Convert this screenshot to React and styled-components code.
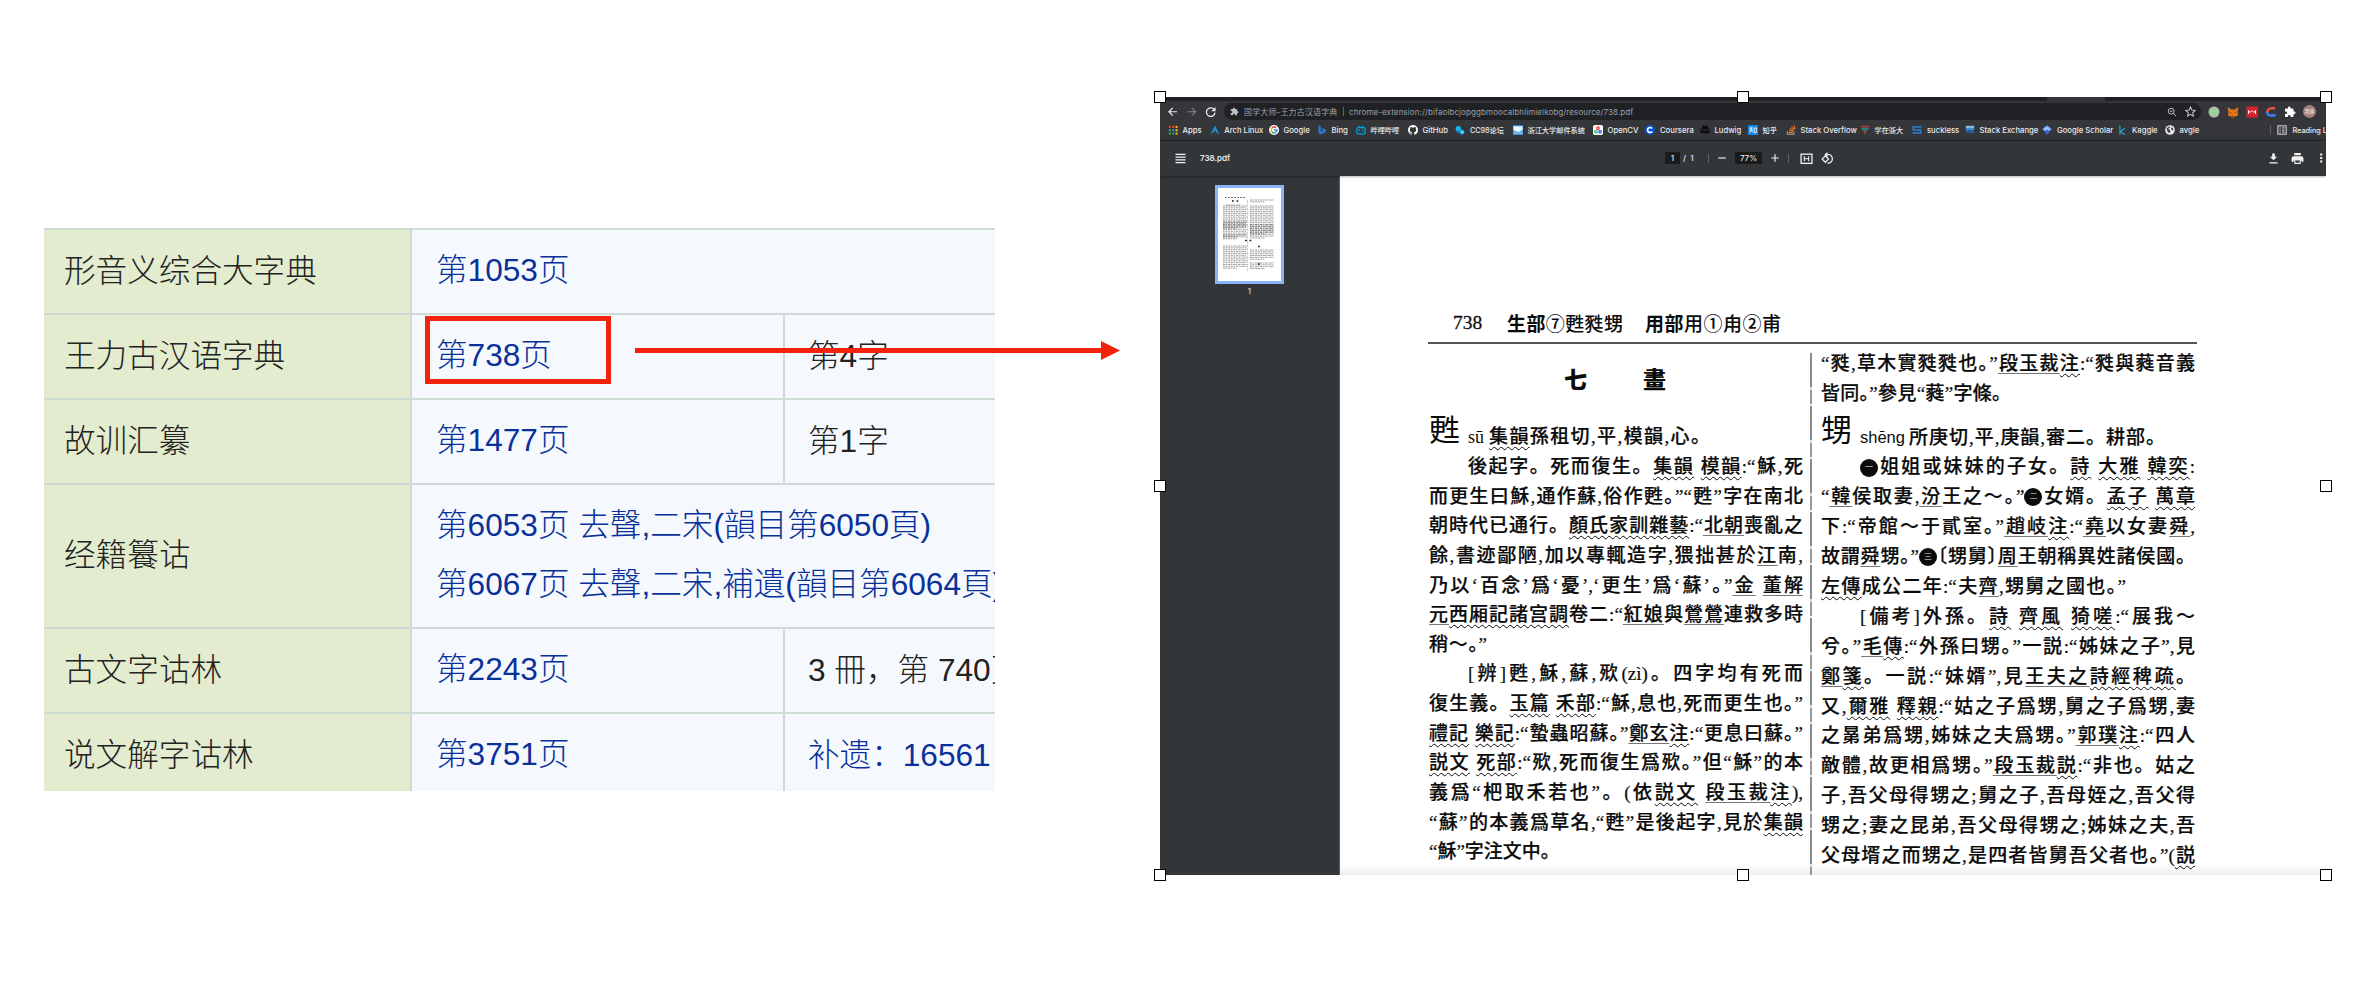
import React from "react";
import styled, { createGlobalStyle, css } from "styled-components";

const Global = createGlobalStyle`
  * { box-sizing: border-box; }
  body { margin: 0; background: #fff; overflow: hidden; }
`;

const Stage = styled.main`
  position: relative;
  width: 2370px;
  height: 992px;
  display: flex;
  align-items: flex-start;
  overflow: hidden;
`;

/* ---------- dictionary index table ---------- */

const IndexTable = styled.section`
  flex: none;
  width: 951px;
  height: 563px;
  margin: 228px 0 0 44px;
  overflow: hidden;
  font-family: "Liberation Sans", "Noto Sans CJK SC", sans-serif;
  font-size: 31.6px;
  font-weight: 300;
`;

const IndexRow = styled.div`
  display: flex;
  height: ${(p) => (p.$tall ? 144 : 85)}px;
  border-top: 2px solid #ccdcd3;
`;

const NameCell = styled.div`
  flex: none;
  width: 368px;
  padding: 0 0 8px 20px;
  display: flex;
  align-items: center;
  white-space: nowrap;
  background: #e3ecce;
  border-right: 2px solid #ccdcd3;
  color: #222;
`;

const PageCell = styled.div`
  flex: ${(p) => (p.$wide ? "1 0 auto" : "0 0 373px")};
  padding: 0 0 2px 24px;
  display: flex;
  flex-direction: column;
  justify-content: center;
  line-height: 59.5px;
  white-space: nowrap;
  background: #f5f9fe;
  border-right: ${(p) => (p.$wide ? 0 : "2px solid #ccdcd3")};
  color: #0a3199;
`;

const NoteCell = styled.div`
  flex: 1 0 210px;
  padding: 0 0 8px 23px;
  display: flex;
  align-items: center;
  white-space: pre;
  background: #f5f9fe;
  color: ${(p) => (p.$link ? "#0a3199" : "#222")};
`;

const rows = [
  { name: "形音义综合大字典", pages: ["第1053页"] },
  { name: "王力古汉语字典", pages: ["第738页"], note: "第4字" },
  { name: "故训汇纂", pages: ["第1477页"], note: "第1字" },
  {
    name: "经籍籑诂",
    pages: ["第6053页 去聲,二宋(韻目第6050頁)", "第6067页 去聲,二宋,補遺(韻目第6064頁)"],
    tall: true,
  },
  { name: "古文字诂林", pages: ["第2243页"], note: "3 冊，第 740页" },
  { name: "说文解字诂林", pages: ["第3751页"], note: "补遗：16561", link: true },
];

/* ---------- annotations ---------- */

const Highlight = styled.div`
  position: absolute;
  left: 425px;
  top: 316px;
  width: 186px;
  height: 68px;
  border: 5px solid #f2220d;
`;

const Arrow = styled.svg`
  position: absolute;
  left: 635px;
  top: 341px;
`;

const Handle = styled.i`
  position: absolute;
  left: ${(p) => p.$x}px;
  top: ${(p) => p.$y}px;
  width: 12px;
  height: 12px;
  background: #fff;
  border: 1px solid #000;
`;

/* ---------- browser window ---------- */

const Browser = styled.section`
  flex: none;
  width: 1166px;
  height: 778px;
  margin: 97px 0 0 165px;
  display: flex;
  flex-direction: column;
  overflow: hidden;
  background: #323639;
  font-family: Inter, "Noto Sans CJK SC", sans-serif;
  color: #e8eaed;
`;

const TabStrip = styled.div`
  flex: none;
  height: 4px;
  background: #202124;
  padding-left: 887px;
`;

const ActiveTab = styled.div`
  width: 58px;
  height: 4px;
  background: #35363a;
`;

const NavBar = styled.div`
  flex: none;
  height: 21px;
  background: #35363a;
  display: flex;
  align-items: center;
  padding: 0 11px 0 7px;
`;

const NavIcons = styled.div`
  flex: none;
  display: flex;
  width: 57px;
  gap: 7.5px;
  align-items: center;
`;

const AddressBar = styled.div`
  flex: none;
  width: 977px;
  height: 17px;
  border-radius: 9px;
  background: #202124;
  display: flex;
  align-items: center;
  padding: 0 5px 0 6px;
  font-size: 8px;
  color: #9aa0a6;
  white-space: nowrap;
`;

const SiteName = styled.span`
  width: 95px;
  margin-left: 5px;
  letter-spacing: 0.15px;
`;

const AddressDivider = styled.i`
  width: 1px;
  height: 9px;
  margin: 0 5px 0 4px;
  background: #5f6368;
`;

const Url = styled.span`
  flex: 1;
  letter-spacing: 0.1px;
`;

const AddressActions = styled.div`
  display: flex;
  gap: 8px;
  align-items: center;
`;

const Extensions = styled.div`
  flex: none;
  margin-left: 7px;
  display: flex;
  gap: 7px;
  align-items: center;
`;

const Avatar = styled.span`
  width: 13px;
  height: 13px;
  border-radius: 50%;
  background: #a1807a;
  color: #fff;
  font-size: 5px;
  line-height: 13px;
  text-align: center;
`;

const BookmarkBar = styled.nav`
  flex: none;
  height: 19px;
  background: #35363a;
  border-bottom: 1px solid #2a2b2e;
  display: flex;
  align-items: center;
  padding: 0 0 2px 8px;
  font-size: 7.7px;
  font-weight: 500;
  overflow: hidden;
`;

const Bookmark = styled.span`
  flex: none;
  width: ${(p) => p.$w}px;
  display: flex;
  align-items: center;
  gap: 4.5px;
  font-size: ${(p) => (p.$cjk ? 7.2 : 7.7)}px;
  white-space: nowrap;
  svg { flex: none; }
`;

const ReadingList = styled.span`
  flex: none;
  display: flex;
  align-items: center;
  gap: 5px;
  padding-left: 6px;
  border-left: 1px solid #5f6368;
  font-size: 7.3px;
  white-space: nowrap;
`;

const PdfBar = styled.div`
  flex: none;
  height: 35px;
  background: #323639;
  display: flex;
  align-items: center;
  padding: 0 0 1px 15px;
  font-size: 8px;
  font-weight: 500;
  box-shadow: 0 0 3px rgba(0, 0, 0, 0.5);
  z-index: 1;
  svg { flex: none; }
`;

const FileName = styled.span`
  flex: none;
  width: 465px;
  margin-left: 14px;
  font-weight: 600;
`;

const PdfField = styled.span`
  flex: none;
  width: ${(p) => p.$w}px;
  height: 12px;
  line-height: 12px;
  background: #191b1c;
  text-align: center;
`;

const PageTotal = styled.span`
  flex: none;
  width: 28px;
  padding-left: 3px;
  white-space: pre;
`;

const PdfDivider = styled.i`
  flex: none;
  width: 1px;
  height: 9px;
  background: #5f6368;
`;

const PdfTools = styled.div`
  flex: none;
  width: ${(p) => p.$w}px;
  margin-left: ${(p) => p.$push || 0}px;
  display: flex;
  align-items: center;
  justify-content: space-between;
  padding: 0 ${(p) => p.$pad}px;
`;

const Viewer = styled.div`
  flex: 1;
  min-height: 0;
  display: flex;
`;

const Sidebar = styled.aside`
  flex: none;
  width: 180px;
  border-right: 1px solid #5b5e60;
  padding: 9px 0 0 55px;
`;

const Thumb = styled.div`
  width: 69px;
  height: 99px;
  border: 3.5px solid #8ab4f8;
  background: #fff;
  svg { display: block; }
`;

const ThumbLabel = styled.div`
  width: 69px;
  margin-top: 1px;
  font-size: 8px;
  line-height: 12px;
  text-align: center;
`;

/* ---------- scanned page ---------- */

const Paper = styled.article`
  flex: 1;
  background: linear-gradient(#fff calc(100% - 12px), #efefef);
  padding: 133px 0 0 88px;
  font-family: "Liberation Serif", "Noto Sans CJK JP", serif;
  font-size: 19px;
  font-weight: 500;
  color: #0b0b0b;
  overflow: hidden;
`;

const Running = styled.header`
  display: flex;
  align-items: center;
  width: 769px;
  height: 35px;
  padding: 0 0 7px 25px;
  border-bottom: 2px solid #555;
  white-space: nowrap;
  font-size: 19px;
`;

const PageNo = styled.span`
  width: 54px;
  padding-top: 2px;
  font-size: 19.5px;
  -webkit-text-stroke: 0.3px #111;
`;

const Radicals = styled.span`
  width: ${(p) => p.$w}px;
  margin-right: ${(p) => p.$gap || 0}px;
  text-align-last: justify;
  font-family: "Noto Sans CJK JP", sans-serif;
  b { font-weight: 700; }
`;

const Columns = styled.div`
  display: flex;
  height: 540px;
`;

const Column = styled.div`
  flex: none;
  width: 374px;
  margin-left: ${(p) => p.$left}px;
  padding-top: ${(p) => p.$top}px;
`;

const Divider = styled.div`
  flex: none;
  width: 2px;
  height: 530px;
  margin: 9px 0 0 7px;
  background: repeating-linear-gradient(#8a8a8a 0 34px, #ddd 34px 37px, #999 37px 51px, #eee 51px 53px);
`;

const Stroke = styled.h2`
  display: flex;
  gap: 56px;
  margin: 0 0 0 135px;
  height: 59px;
  font: 900 23px/32px "Noto Sans CJK JP", sans-serif;
`;

const Line = styled.p`
  margin: 0 0 0 ${(p) => p.$in || 0}px;
  width: ${(p) => p.$w || 374 - (p.$in || 0)}px;
  height: ${(p) => p.$h}px;
  line-height: ${(p) => p.$h}px;
  white-space: nowrap;
  text-align: justify;
  text-align-last: justify;
  -webkit-text-stroke: 0.2px #0b0b0b;
`;

const mark = css`
  text-decoration-line: underline;
  text-decoration-thickness: 1px;
  text-decoration-skip-ink: none;
  text-underline-offset: 3px;
`;

const Book = styled.span`
  ${mark}
  text-decoration-style: wavy;
`;

const Person = styled.span`
  ${mark}
  text-decoration-color: #777;
`;

const Sense = styled.span`
  display: inline-block;
  width: 18px;
  height: 18px;
  border-radius: 50%;
  background: #0b0b0b;
  color: #ddd;
  font-size: 8px;
  line-height: 18px;
  text-align: center;
  text-align-last: center;
  vertical-align: -2px;
  vertical-align: middle;
  margin-top: -3px;
`;

const Half = styled.span`
  font-feature-settings: "halt";
`;

const Entry = styled.div`
  display: flex;
  align-items: flex-end;
  height: ${(p) => p.$h}px;
`;

const Head = styled.span`
  flex: none;
  width: ${(p) => p.$w}px;
  font-size: 31px;
  font-weight: 400;
  line-height: 42px;
`;

const Pinyin = styled.span`
  flex: none;
  width: ${(p) => p.$w}px;
  font: ${(p) => (p.$sans ? '16.5px/29px "Liberation Sans", sans-serif' : '18px/29px "Liberation Serif", serif')};
`;

// ^…^ marks a book title, _…_ a proper name, a digit in # # a numbered sense
const rich = (text) =>
  text.split(/(\^[^^]+\^|_[^_]+_|#.#|[〔〕])/).map((part, i) => {
    if (part[0] === "^") return <Book key={i}>{part.slice(1, -1)}</Book>;
    if (part[0] === "_") return <Person key={i}>{part.slice(1, -1)}</Person>;
    if (part[0] === "#") return <Sense key={i}>{part[1]}</Sense>;
    if (part === "〔" || part === "〕") return <Half key={i}>{part}</Half>;
    return part;
  });

const leftLines = [
  { t: "後起字。死而復生。^集韻^ ^模韻^:“穌,死", in: 39 },
  { t: "而更生曰穌,通作蘇,俗作甦。”“甦”字在南北" },
  { t: "朝時代已通行。^顏氏家訓雜藝^:“_北朝_喪亂之" },
  { t: "餘,書迹鄙陋,加以專輒造字,猥拙甚於_江_南," },
  { t: "乃以‘百念’爲‘憂’,‘更生’爲‘蘇’。”_金_ _董解_" },
  { t: "_元_^西厢記諸宫調^卷二:“_紅娘_與_鶯鶯_連救多時" },
  { t: "稍～。”", w: 58 },
  { t: "[辨]甦,穌,蘇,\u3c37(zì)。四字均有死而", in: 39 },
  { t: "復生義。^玉篇^ ^禾部^:“穌,息也,死而更生也。”" },
  { t: "^禮記^ ^樂記^:“蟄蟲昭蘇。”_鄭玄_^注^:“更息曰蘇。”" },
  { t: "^説文^ ^死部^:“\u3c37,死而復生爲\u3c37。”但“穌”的本" },
  { t: "義爲“杷取禾若也”。(依^説文^ _段玉裁_^注^)," },
  { t: "“蘇”的本義爲草名,“甦”是後起字,見於^集韻^" },
  { t: "“穌”字注文中。", w: 127 },
];

const rightLines = [
  { t: "#一#姐姐或妹妹的子女。^詩^ ^大雅^ ^韓奕^:", in: 39 },
  { t: "“_韓_侯取妻,_汾_王之～。”#二#女婿。^孟子^ ^萬章^" },
  { t: "下:“帝館～于貳室。”_趙岐_^注^:“_堯_以女妻_舜_," },
  { t: "故謂_舜_甥。”#三#〔甥舅〕_周_王朝稱異姓諸侯國。" },
  { t: "^左傳^成公二年:“夫_齊_,甥舅之國也。”", w: 305 },
  { t: "[備考]外孫。^詩^ ^齊風^ ^猗嗟^:“展我～", in: 39 },
  { t: "兮。”_毛_^傳^:“外孫曰甥。”一説:“姊妹之子”,見" },
  { t: "_鄭_^箋^。一説:“妹婿”,見_王夫之_^詩經稗疏^。" },
  { t: "又,^爾雅^ ^釋親^:“姑之子爲甥,舅之子爲甥,妻" },
  { t: "之晜弟爲甥,姊妹之夫爲甥。”_郭璞_^注^:“四人" },
  { t: "敵體,故更相爲甥。”_段玉裁_^説^:“非也。姑之" },
  { t: "子,吾父母得甥之;舅之子,吾母姪之,吾父得" },
  { t: "甥之;妻之昆弟,吾父母得甥之;姊妹之夫,吾" },
  { t: "父母壻之而甥之,是四者皆舅吾父者也。”(^説^" },
];

/* ---------- icons ---------- */

const Svg = ({ s = 10, box = 24, children, ...rest }) => (
  <svg width={s} height={s} viewBox={`0 0 ${box} ${box}`} fill="none" {...rest}>
    {children}
  </svg>
);

const Puzzle = ({ s = 10, c = "#e8eaed" }) => (
  <Svg s={s}>
    <path fill={c} d="M20.5 11H19V7a2 2 0 0 0-2-2h-4V3.500a2.500 2.500 0 0 0-5 0V5H4a2 2 0 0 0-2 2v3.800h1.500a2.700 2.700 0 0 1 0 5.400H2V20a2 2 0 0 0 2 2h3.800v-1.500a2.700 2.700 0 0 1 5.400 0V22H17a2 2 0 0 0 2-2v-4h1.500a2.500 2.500 0 0 0 0-5z" />
  </Svg>
);

const icons = {
  apps: (
    <Svg>
      {["#ea4335", "#ea4335", "#fbbc04", "#34a853", "#4285f4", "#fbbc04", "#34a853", "#34a853", "#fbbc04"].map((c, i) => (
        <rect key={i} x={2 + (i % 3) * 8} y={2 + Math.floor(i / 3) * 8} width="5" height="5" fill={c} />
      ))}
    </Svg>
  ),
  arch: <Svg><path fill="#1793d1" d="M12 1 1 23q5-4 8-5c0-6 6-6 6 0q3 1 8 5z" /></Svg>,
  google: (
    <Svg>
      <circle cx="12" cy="12" r="12" fill="#fff" />
      <g strokeWidth="3.600">
        <path stroke="#ea4335" d="M6 8.500A7 7 0 0 1 17 7" />
        <path stroke="#fbbc04" d="M6 8.500a7 7 0 0 0 0 7" />
        <path stroke="#34a853" d="M6 15.500A7 7 0 0 0 17 17" />
        <path stroke="#4285f4" d="M12 12h7q0 3-2 5" />
      </g>
    </Svg>
  ),
  bing: <Svg><path fill="#2a7de1" d="m4 1 5 2v14l6-4-3-2-2-4 11 4v5L9 23l-5-3z" /></Svg>,
  bili: (
    <Svg>
      <g stroke="#00a1d6" strokeWidth="3">
        <rect x="2" y="6" width="20" height="15" rx="3" />
        <path d="m7 2 3 4m7-4-3 4M8 11v4m8-4v4" />
      </g>
    </Svg>
  ),
  github: (
    <Svg box={16}>
      <path fill="#fff" d="M8 0C3.580 0 0 3.580 0 8c0 3.540 2.290 6.530 5.470 7.590.4.070.55-.17.55-.38v-1.490c-2.010.37-2.530-.49-2.690-.94-.09-.23-.48-.94-.82-1.130-.28-.15-.68-.52-.01-.53.63-.01 1.080.58 1.230.82.72 1.210 1.870.87 2.330.66.070-.52.280-.87.510-1.070-1.780-.2-3.640-.89-3.640-3.950 0-.87.310-1.590.82-2.150-.08-.2-.36-1.020.08-2.120 0 0 .67-.21 2.200.82a7.600 7.600 0 0 1 4 0c1.530-1.040 2.200-.82 2.200-.82.440 1.100.160 1.920.080 2.120.51.560.82 1.270.82 2.150 0 3.070-1.870 3.750-3.650 3.950.29.250.54.730.54 1.480v2.200c0 .21.150.46.550.38A8 8 0 0 0 16 8c0-4.420-3.580-8-8-8z" />
    </Svg>
  ),
  cc98: (
    <Svg>
      <circle cx="8" cy="9" r="6.500" fill="#19b5f1" />
      <circle cx="17" cy="17" r="5.500" fill="#19b5f1" />
      <circle cx="8" cy="16" r="4" fill="#078bd0" />
      <circle cx="17" cy="17" r="2" fill="#d9f4ff" />
    </Svg>
  ),
  mail: (
    <Svg>
      <rect width="24" height="24" fill="#2389dd" />
      <path fill="#e8f4ff" d="M1 3h22v9l-11 6L1 12z" />
      <path fill="#7bb9ec" d="m1 13 11 6 11-6v9H1z" />
    </Svg>
  ),
  opencv: (
    <Svg>
      <rect width="24" height="24" rx="4" fill="#fff" />
      <circle cx="12" cy="7.500" r="3" stroke="#f33" strokeWidth="3" />
      <circle cx="7" cy="16" r="3" stroke="#27c46b" strokeWidth="3" />
      <circle cx="17" cy="16" r="3" stroke="#3461e8" strokeWidth="3" />
    </Svg>
  ),
  coursera: (
    <Svg>
      <circle cx="12" cy="12" r="12" fill="#0056d2" />
      <path stroke="#fff" strokeWidth="4" d="M17 8.500a6 6 0 1 0 0 7" />
    </Svg>
  ),
  ludwig: (
    <Svg>
      <path fill="#0c0c0c" d="M5 2h14v7h4v11H1V9h4z" />
      <path stroke="#555" strokeWidth="1.500" d="M3 12h18" />
    </Svg>
  ),
  zhihu: (
    <Svg>
      <rect width="24" height="24" rx="2" fill="#0f88eb" />
      <path stroke="#fff" strokeWidth="2" d="M6 5 4 9m1-2h7M3 12h10M8 7v5l-4 7m4-6 4 5m3-11h5v11h-5z" />
    </Svg>
  ),
  so: (
    <Svg>
      <path stroke="#a8a8a8" strokeWidth="2.500" d="M3 15v7h16v-7" />
      <path stroke="#f48024" strokeWidth="2.500" d="M6 18h10M7 13l10 2M9 8l9 5M13 4l7 7M19 1l3 9" />
    </Svg>
  ),
  xzzd: (
    <Svg>
      <path fill="#b54040" d="M2 2h20v4H2z" />
      <path fill="#287f77" d="M2 7h20l-3 5H5z" />
      <path fill="#8b7b3c" d="M8 13h8v3H8z" />
      <path fill="#bd4646" d="M9 18h6l-3 5z" />
    </Svg>
  ),
  suckless: <Svg><path stroke="#2681d6" strokeWidth="3.500" d="M23 5H3v7h18v7H1" /></Svg>,
  se: (
    <Svg>
      <path fill="#8fc7ef" d="M2 2h20v5H2z" />
      <path fill="#3f8fd0" d="M2 7h20v6H2z" />
      <path fill="#1f5f9f" d="M2 13h20v6h-5v4l-4-4H2z" />
    </Svg>
  ),
  scholar: (
    <Svg>
      <path fill="#5b94f5" d="m12 0 12 10-12 9L0 10z" />
      <path fill="#a0c3ff" d="M5 12a7 7 0 0 1 14 0l-7 11z" />
      <path fill="#3367d6" d="M6 15q6-7 12 0l-6 9z" />
    </Svg>
  ),
  kaggle: <Svg><path stroke="#20beff" strokeWidth="3" opacity=".8" d="M7 1v22M19 8 8 16l11 7" /></Svg>,
  globe: (
    <Svg>
      <circle cx="12" cy="12" r="11.500" fill="#e8eaed" />
      <path fill="#35363a" d="M4 8q4-5 8-4l-2 4-3 1 5 3 1 4-3 4q-6-4-6-12zm11-3q6 3 5 9l-5-3z" />
    </Svg>
  ),
};

const bookmarks = [
  ["apps", "Apps", 41.7],
  ["arch", "Arch Linux", 59.3],
  ["google", "Google", 48],
  ["bing", "Bing", 39],
  ["bili", "哔哩哔哩", 52],
  ["github", "GitHub", 47.5],
  ["cc98", "CC98论坛", 57.5],
  ["mail", "浙江大学邮件系统", 80],
  ["opencv", "OpenCV", 52.5],
  ["coursera", "Coursera", 54.5],
  ["ludwig", "Ludwig", 48],
  ["zhihu", "知乎", 38],
  ["so", "Stack Overflow", 74],
  ["xzzd", "学在浙大", 52.5],
  ["suckless", "suckless", 52.5],
  ["se", "Stack Exchange", 77.5],
  ["scholar", "Google Scholar", 75],
  ["kaggle", "Kaggle", 47.5],
  ["globe", "avgle", 105.5],
];

const Scan = () => {
  const blocks = [
    [8, 17, 24, 1], [32, 12, 24, 2], [5, 18, 24, 13], [32, 18, 24, 16],
    [5, 34, 24, 9], [32, 37, 24, 8], [5, 47, 24, 3],
    [5, 58, 24, 13], [32, 62, 24, 6], [32, 75, 24, 4],
  ];
  return (
    <svg width="62" height="92" viewBox="0 0 62 92" fill="none">
      <path stroke="#777" strokeWidth="1" strokeDasharray="2 1" d="M7 9.500h20" />
      {blocks.map(([x, y, w, n], i) =>
        Array.from({ length: n }, (_, k) => (
          <path
            key={`${i}-${k}`}
            stroke="#333"
            strokeWidth="1"
            strokeDasharray={k % 2 ? "1.600 .7 2.300 .8" : "2.200 .6 1.200 .9"}
            opacity=".5"
            d={`M${x} ${y + k * 1.85}h${k === n - 1 ? w * 0.6 : w}`}
          />
        ))
      )}
      <path stroke="#999" strokeWidth=".5" d="M29.500 12v71" strokeDasharray="3 1" />
      <path stroke="#222" strokeWidth="1.600" strokeDasharray="1.800 2.700" d="M27 52.500h6.500M40 58.500h4M40 76h4M14 13h6.500" />
    </svg>
  );
};

export default function App() {
  return (
    <Stage>
      <Global />
      <IndexTable>
        {rows.map((r) => (
          <IndexRow key={r.name} $tall={r.tall}>
            <NameCell>{r.name}</NameCell>
            <PageCell $wide={!r.note}>
              {r.pages.map((p) => (
                <span key={p}>{p}</span>
              ))}
            </PageCell>
            {r.note && <NoteCell $link={r.link}>{r.note}</NoteCell>}
          </IndexRow>
        ))}
      </IndexTable>

      <Browser>
        <TabStrip><ActiveTab /></TabStrip>
        <NavBar>
          <NavIcons>
            <Svg s={11.5} stroke="#e8eaed" strokeWidth="2.600"><path d="M21 12H4m8-8-8 8 8 8" /></Svg>
            <Svg s={11.5} stroke="#85878b" strokeWidth="2.200"><path d="M3 12h17m-8-8 8 8-8 8" /></Svg>
            <Svg s={11.5} stroke="#e8eaed" strokeWidth="2.600">
              <path d="M19 7a9 9 0 1 0 2 7" />
              <path fill="#e8eaed" stroke="none" d="M22 2v9h-9z" />
            </Svg>
          </NavIcons>
          <AddressBar>
            <Puzzle s={9} c="#bdc1c6" />
            <SiteName>国学大师-王力古汉语字典</SiteName>
            <AddressDivider />
            <Url>chrome-extension://bifaolbcjopggbmoocalbhlimielkobg/resource/738.pdf</Url>
            <AddressActions>
              <Svg s={10} stroke="#c4c7ca" strokeWidth="2.300"><circle cx="10" cy="10" r="7" /><path d="m15 15 7 7M7 10h6" /></Svg>
              <Svg s={11} stroke="#c4c7ca" strokeWidth="2.200"><path d="m12 2 3 7 7.500.600-5.700 5 1.700 7.400-6.500-4-6.500 4 1.700-7.400-5.700-5L9 9z" /></Svg>
            </AddressActions>
          </AddressBar>
          <Extensions>
            <Svg s={12}><circle cx="12" cy="12" r="9" fill="#8ddb91" stroke="#b6b6b6" strokeWidth="4" /></Svg>
            <Svg s={12}>
              <path fill="#e2761b" d="m1 2 8 5h6l8-5-2 10 1 7-6 2-2 2h-4l-2-2-6-2 1-7z" />
              <path fill="#763e1a" d="m6 12 4 2-3 1zm12 0-4 2 3 1zM9 20h6v2H9z" />
            </Svg>
            <Svg s={12}>
              <rect x="1" y="1" width="23" height="22" fill="#d9202e" />
              <path stroke="#fff" strokeWidth="1.800" d="M5 16V9l3 4 4-4 4 4 3-4v7" />
            </Svg>
            <Svg s={12}>
              <path stroke="#f0523f" strokeWidth="5" d="M20 5Q6 2 4 13" />
              <path stroke="#3f7df0" strokeWidth="5" d="M4 12q1 10 17 6" />
            </Svg>
            <Puzzle s={12} c="#fff" />
            <Avatar>邦彦</Avatar>
          </Extensions>
        </NavBar>
        <BookmarkBar>
          {bookmarks.map(([icon, label, w]) => (
            <Bookmark key={label} $w={w} $cjk={/[\u4e00-\u9fff]/.test(label)}>
              {icons[icon]}
              {label}
            </Bookmark>
          ))}
          <ReadingList>
            <Svg s={10} stroke="#dadce0" strokeWidth="2.400">
              <rect x="2" y="2" width="20" height="20" />
              <path d="M6 7h3m3 0h6M6 12h3m3 0h6M6 17h3m3 0h6" />
            </Svg>
            Reading List
          </ReadingList>
        </BookmarkBar>
        <PdfBar>
          <Svg s={11} stroke="#f1f1f1" strokeWidth="2.800"><path d="M1 3h22M1 9h22M1 15h22M1 21h22" /></Svg>
          <FileName>738.pdf</FileName>
          <PdfField $w={15}>1</PdfField>
          <PageTotal>/  1</PageTotal>
          <PdfDivider />
          <PdfTools $w={79} $pad={8}>
            <Svg s={10} stroke="#f1f1f1" strokeWidth="2.800"><path d="M3 12h18" /></Svg>
            <PdfField $w={27}>77%</PdfField>
            <Svg s={10} stroke="#f1f1f1" strokeWidth="2.800"><path d="M3 12h18M12 3v18" /></Svg>
          </PdfTools>
          <PdfDivider />
          <PdfTools $w={56} $pad={11}>
            <Svg s={13} stroke="#f1f1f1" strokeWidth="2.400">
              <rect x="2" y="4" width="20" height="17" />
              <path d="M8 8v9M16 8v9M9 12.500h6" strokeWidth="2" />
            </Svg>
            <Svg s={13} stroke="#f1f1f1" strokeWidth="2.200">
              <path d="m8 7 6 6-6 6-6-6zM9 5q6-2 10 2 4 6 0 11-3 3-7 3" />
              <path fill="#f1f1f1" stroke="none" d="m12 0-6 5 6 5z" />
            </Svg>
          </PdfTools>
          <PdfTools $w={64} $pad={3} $push={420}>
            <Svg s={11}><path fill="#f1f1f1" d="M9 1h6v7h5l-8 8-8-8h5zM3 20h18v3H3z" /></Svg>
            <Svg s={13}>
              <path fill="#f1f1f1" d="M6 2h12v4H6zM5 8h14q4 0 4 4v6h-4v-3H5v3H1v-6q0-4 4-4z" />
              <path stroke="#f1f1f1" strokeWidth="2" d="M7 14h10v7H7z" />
            </Svg>
            <Svg s={10}><path fill="#f1f1f1" d="M10 1h5v5h-5zM10 9.500h5v5h-5zM10 18h5v5h-5z" /></Svg>
          </PdfTools>
        </PdfBar>
        <Viewer>
          <Sidebar>
            <Thumb><Scan /></Thumb>
            <ThumbLabel>1</ThumbLabel>
          </Sidebar>
          <Paper>
            <Running>
              <PageNo>738</PageNo>
              <Radicals $w={116} $gap={22}><b>生部</b>⑦甦甤甥</Radicals>
              <Radicals $w={136}><b>用部</b>用①甪②甫</Radicals>
            </Running>
            <Columns>
              <Column $left={1} $top={18}>
                <Stroke><span>七</span><span>畫</span></Stroke>
                <Entry $h={31}>
                  <Head $w={39}>甦</Head>
                  <Pinyin $w={21}>sū</Pinyin>
                  <Line $w={221} $h={29.6}>{rich("^集韻^孫租切,平,模韻,心。")}</Line>
                </Entry>
                {leftLines.map((l) => (
                  <Line key={l.t} $in={l.in} $w={l.w} $h={29.65}>{rich(l.t)}</Line>
                ))}
              </Column>
              <Divider />
              <Column $left={9} $top={5}>
                <Line $h={29.7}>{rich("“甤,草木實甤甤也。”_段玉裁_^注^:“甤與蕤音義")}</Line>
                <Line $w={190} $h={29.7}>{rich("皆同。”參見“蕤”字條。")}</Line>
                <Entry $h={44}>
                  <Head $w={39}>甥</Head>
                  <Pinyin $sans $w={49}>shēng</Pinyin>
                  <Line $w={256} $h={29.6}>{rich("所庚切,平,庚韻,審二。耕部。")}</Line>
                </Entry>
                {rightLines.map((l) => (
                  <Line key={l.t} $in={l.in} $w={l.w} $h={29.9}>{rich(l.t)}</Line>
                ))}
              </Column>
            </Columns>
          </Paper>
        </Viewer>
      </Browser>

      <Highlight />
      <Arrow width="485" height="19" viewBox="0 0 485 19" fill="#f2220d">
        <path d="M0 7h466V0l19 9.500L466 19v-7H0z" />
      </Arrow>
      {[91, 480, 869].flatMap((y) =>
        [1154, 1737, 2320]
          .filter((x) => !(y === 480 && x === 1737))
          .map((x) => <Handle key={`${x}-${y}`} $x={x} $y={y} />)
      )}
    </Stage>
  );
}
